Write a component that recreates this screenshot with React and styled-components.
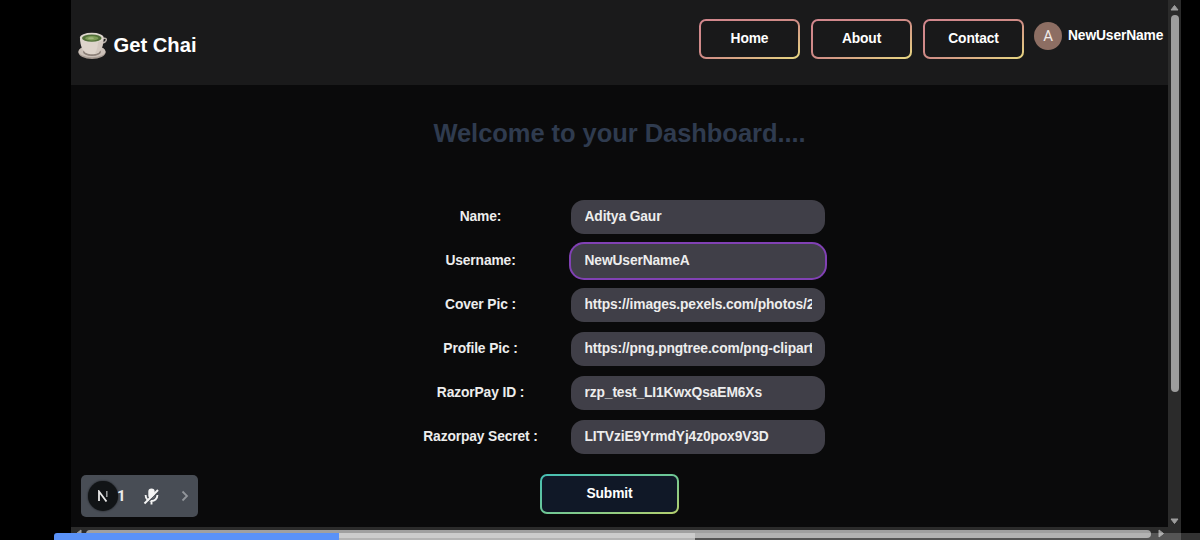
import React from "react";
import styled, { createGlobalStyle } from "styled-components";

const GlobalStyle = createGlobalStyle`
  * { box-sizing: border-box; }
  body { margin: 0; background: #000; overflow: hidden; }
  button, input { font-family: inherit; letter-spacing: inherit; }
`;

const Screen = styled.div`
  position: relative;
  width: 1200px;
  height: 540px;
  padding-left: 71px;
  background: #000;
  overflow: hidden;
  font-family: "Liberation Sans", Arial, sans-serif;
  font-weight: 700;
  font-size: 13.8px;
  letter-spacing: -0.12px;
  color: #ededed;
`;

const Browser = styled.div`
  display: grid;
  grid-template-columns: 1097px 13px;
  grid-template-rows: 527px 13px;
  width: 1110px;
`;

const Page = styled.div`
  background: #0a0a0b;
  overflow: hidden;
`;

const Header = styled.header`
  display: flex;
  justify-content: space-between;
  height: 85px;
  padding: 19px 5px 0 7px;
  background: #1a1a1b;
`;

const Brand = styled.div`
  display: flex;
  align-items: center;
  gap: 6.5px;
  height: 53px;
  font-size: 20.2px;
  letter-spacing: 0;
  color: #fff;
`;

const Nav = styled.nav`
  display: flex;
  align-items: flex-start;
  gap: 10px;
`;

const OutlineButton = styled.button`
  width: ${(p) => p.$width}px;
  height: ${(p) => p.$height}px;
  padding: 0 0 1px;
  border: 2px solid transparent;
  border-radius: 7px;
  background:
    linear-gradient(${(p) => p.$fill}, ${(p) => p.$fill}) padding-box,
    linear-gradient(to bottom right, ${(p) => p.$colors}) border-box;
  color: #fff;
  font-weight: 700;
  font-size: 13.8px;
`;

const NavButton = styled(OutlineButton)`
  margin-right: 1px;

  &:last-of-type {
    margin-right: 0;
  }
`;

const User = styled.div`
  display: flex;
  align-items: center;
  gap: 6px;
  width: 129px;
  height: 33px;
  color: #fff;
`;

const UserName = styled.span`
  white-space: nowrap;
`;

const Avatar = styled.span`
  display: flex;
  flex: none;
  align-items: center;
  justify-content: center;
  width: 28px;
  height: 28px;
  padding-top: 1px;
  border-radius: 50%;
  background: #8d6e63;
  font: 400 15px Roboto, sans-serif;
  color: #f0eae8;
`;

const Title = styled.h1`
  margin: 32px 0 0;
  text-align: center;
  font-size: 25.5px;
  line-height: 32px;
  letter-spacing: -0.05px;
  color: #2f3b4f;
`;

const Form = styled.form`
  display: flex;
  flex-direction: column;
  align-items: center;
  gap: 10px;
  margin-top: 51px;
`;

const Field = styled.label`
  display: grid;
  grid-template-columns: 161px 254px;
  align-items: center;
  height: 34px;
  margin-right: 4px;
`;

const FieldName = styled.span`
  width: 141px;
  padding-bottom: 1px;
  text-align: center;
`;

const Input = styled.input`
  width: 254px;
  height: 34px;
  padding: 0 13px 1px 13.5px;
  border: 0;
  border-radius: 13px;
  outline: none;
  background: #403f48;
  color: #ededed;
  font-weight: 700;
  font-size: 13.8px;
  box-shadow: ${(p) => (p.$active ? "0 0 0 2px #8141b4" : "none")};
`;

const VScroll = styled.div`
  display: flex;
  flex-direction: column;
  align-items: center;
  background: #2b2b2b;
  padding: 4px 0 2px;
`;

const VThumb = styled.div`
  width: 8px;
  height: 377px;
  margin: 4px 0 auto;
  border-radius: 4px;
  background: #9d9d9d;
`;

const HScroll = styled.div`
  grid-column: 1 / 3;
  display: flex;
  align-items: center;
  padding-left: 4px;
  background: #2b2b2b;
`;

const HThumb = styled.div`
  width: 1065px;
  height: 8px;
  margin: 0 7px 0 4px;
  border-radius: 4px;
  background: #a0a0a0;
`;

const CallPanel = styled.div`
  position: absolute;
  left: 81px;
  top: 475px;
  display: flex;
  align-items: center;
  width: 117px;
  height: 42px;
  padding: 0 0 1px 7px;
  border-radius: 5px;
  background: #484d55;
`;

const DevBadge = styled.span`
  display: flex;
  align-items: center;
  justify-content: center;
  width: 30px;
  height: 30px;
  border-radius: 50%;
  background: #111416;
  box-shadow: 0 0 2px #111416;
`;

const Count = styled.span`
  width: 9px;
  margin-left: -1px;
  font: 700 15px Roboto, sans-serif;
`;

const MicIcon = styled.svg`
  margin: 2px 0 0 17px;
`;

const ChevronIcon = styled.svg`
  margin: 1px 0 0 21px;
`;

const Playback = styled.div`
  position: absolute;
  left: 54px;
  right: 0;
  bottom: 0;
  display: flex;
  height: 7px;
`;

const Segment = styled.div`
  flex: ${(p) => (p.$width ? `0 0 ${p.$width}px` : "1")};
  background: ${(p) => p.$color};
  border-radius: ${(p) => (p.$first ? "3px 0 0 0" : "0")};
`;

const Arrow = ({ d, w = 9, h = 7 }) => (
  <svg width={w} height={h} viewBox={`0 0 ${w} ${h}`}>
    <path d={d} fill="#9d9d9d" stroke="#9d9d9d" strokeLinejoin="round" />
  </svg>
);

const Cup = () => (
  <svg width="29" height="28" viewBox="0 0 29 28">
    <ellipse cx="14" cy="20.3" rx="13.6" ry="6.7" fill="#a89c94" />
    <ellipse cx="14" cy="19.4" rx="13.4" ry="5.8" fill="#cbc0b8" />
    <ellipse cx="14" cy="20" rx="9" ry="4" fill="#8d8179" />
    <path d="M24 7.2c2.8-2 5-.7 4.1 1.4-.7 2-2.5 2.4-4.8 2.5" fill="none" stroke="#b9b0a9" strokeWidth="1.4" />
    <path d="M2 6.5C2.2 13 4 18.8 8.6 21.2c3 1.3 8 1.3 11 0C23.5 18.8 25.5 13 25.6 6.5z" fill="#ded4cb" />
    <path d="M20 10c0 4-1 8-3 11.5 5-.8 8-5 8.5-13z" fill="#c9beb5" opacity=".5" />
    <ellipse cx="13.8" cy="5.8" rx="11.9" ry="5" fill="#ddd6cd" />
    <ellipse cx="13.8" cy="6.1" rx="9.8" ry="3.7" fill="#527039" />
    <ellipse cx="13.8" cy="6.3" rx="6.7" ry="2.2" fill="#7e9d58" />
    <ellipse cx="13" cy="6.3" rx="3" ry="1" fill="#a0b67c" />
  </svg>
);

const fields = [
  ["Name:", "Aditya Gaur"],
  ["Username:", "NewUserNameA", true],
  ["Cover Pic :", "https://images.pexels.com/photos/2"],
  ["Profile Pic :", "https://png.pngtree.com/png-clipart"],
  ["RazorPay ID :", "rzp_test_LI1KwxQsaEM6Xs"],
  ["Razorpay Secret :", "LITVziE9YrmdYj4z0pox9V3D"],
];

const Submit = styled(OutlineButton)`
  margin-top: 10px;
  margin-right: 20px;
`;

export default function App() {
  return (
    <Screen>
      <GlobalStyle />
      <Browser>
        <Page>
          <Header>
            <Brand>
              <Cup />
              Get Chai
            </Brand>
            <Nav>
              {["Home", "About", "Contact"].map((name) => (
                <NavButton
                  key={name}
                  $width={101}
                  $height={40}
                  $fill="#19191a"
                  $colors="#d2878e, #cf8b86 50%, #e8d982"
                >
                  {name}
                </NavButton>
              ))}
              <User>
                <Avatar>A</Avatar>
                <UserName>NewUserName</UserName>
              </User>
            </Nav>
          </Header>
          <Title>Welcome to your Dashboard....</Title>
          <Form>
            {fields.map(([name, value, active]) => (
              <Field key={name}>
                <FieldName>{name}</FieldName>
                <Input defaultValue={value} $active={active} />
              </Field>
            ))}
            <Submit
              type="button"
              $width={139}
              $height={40}
              $fill="#101827"
              $colors="#46bfb4, #6fc795 50%, #b5cf6d"
            >
              Submit
            </Submit>
          </Form>
        </Page>
        <VScroll>
          <Arrow d="M1 6 4.5 1.5 8 6z" />
          <VThumb />
          <Arrow d="M1 1 4.5 5.5 8 1z" />
        </VScroll>
        <HScroll>
          <Arrow w={7} h={9} d="M6 1 1.5 4.5 6 8z" />
          <HThumb />
          <Arrow w={7} h={9} d="M1 1 5.5 4.5 1 8z" />
        </HScroll>
      </Browser>
      <CallPanel>
        <DevBadge>
          <svg width="12" height="12" viewBox="0 0 12 12" fill="none" stroke="#e8e8e8" strokeWidth="1.8">
            <path d="M2 11V1.5L9.5 11.5" />
            <path d="M9.8 1v6" stroke="#a5a7a8" strokeWidth="1.4" />
          </svg>
        </DevBadge>
        <Count>1</Count>
        <MicIcon width="17" height="17" viewBox="0 0 17 17" fill="none" stroke="#f4f4f4">
          <rect x="5.3" y=".5" width="6.4" height="10" rx="3.2" fill="#f4f4f4" stroke="none" />
          <path d="M2.6 7c0 8 11.8 8 11.8 0M8.5 13v3.5" strokeWidth="1.9" />
          <path d="M2.5 16.5 16.5 3" stroke="#484d55" strokeWidth="1.5" />
          <path d="M1.5 15.5 15 2" strokeWidth="2" />
        </MicIcon>
        <ChevronIcon width="8" height="12" viewBox="0 0 8 12" fill="none" stroke="#92969b" strokeWidth="1.8">
          <path d="M1.5 1.5 6 6l-4.5 4.5" />
        </ChevronIcon>
      </CallPanel>
      <Playback>
        <Segment $first $width={285} $color="#5a92f8" />
        <Segment $width={356} $color="rgba(215,215,215,.8)" />
        <Segment $color="rgba(255,255,255,.2)" />
      </Playback>
    </Screen>
  );
}
